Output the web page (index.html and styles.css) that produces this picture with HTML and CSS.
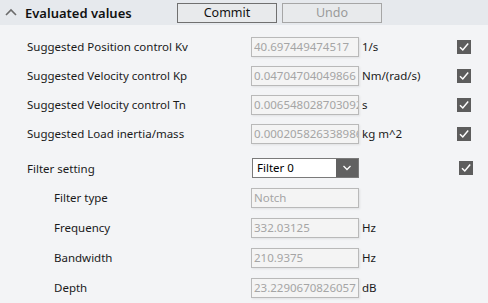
FILE: index.html
```html
<!DOCTYPE html>
<html>
<head>
<meta charset="utf-8">
<link rel="stylesheet" href="styles.css">
</head>
<body>
<div class="panel">
  <div class="header">
    <svg class="chev" width="12" height="8" viewBox="0 0 12 8"><path d="M1 7 L6 2 L11 7" fill="none" stroke="#6b6b6b" stroke-width="1.6"/></svg>
    <span class="title">Evaluated values</span>
    <button class="btn">Commit</button>
    <button class="btn disabled">Undo</button>
  </div>
  <div class="rows">
    <div class="row">
      <span class="label">Suggested Position control Kv</span>
      <input class="input" type="text" readonly value="40.697449474517">
      <span class="unit">1/s</span>
      <span class="check"><svg width="14" height="14" viewBox="0 0 14 14"><path d="M3 7.2 L5.8 10 L11.2 3.6" fill="none" stroke="#fff" stroke-width="1.5"/></svg></span>
    </div>
    <div class="row">
      <span class="label">Suggested Velocity control Kp</span>
      <input class="input" type="text" readonly value="0.04704704049866">
      <span class="unit">Nm/(rad/s)</span>
      <span class="check"><svg width="14" height="14" viewBox="0 0 14 14"><path d="M3 7.2 L5.8 10 L11.2 3.6" fill="none" stroke="#fff" stroke-width="1.5"/></svg></span>
    </div>
    <div class="row">
      <span class="label">Suggested Velocity control Tn</span>
      <input class="input" type="text" readonly value="0.0065480287030929">
      <span class="unit">s</span>
      <span class="check"><svg width="14" height="14" viewBox="0 0 14 14"><path d="M3 7.2 L5.8 10 L11.2 3.6" fill="none" stroke="#fff" stroke-width="1.5"/></svg></span>
    </div>
    <div class="row">
      <span class="label">Suggested Load inertia/mass</span>
      <input class="input" type="text" readonly value="0.0002058263389865">
      <span class="unit">kg m^2</span>
      <span class="check"><svg width="14" height="14" viewBox="0 0 14 14"><path d="M3 7.2 L5.8 10 L11.2 3.6" fill="none" stroke="#fff" stroke-width="1.5"/></svg></span>
    </div>
    <div class="row filter">
      <span class="label">Filter setting</span>
      <div class="select">
        <span class="sel-text">Filter 0</span>
        <span class="sel-btn"><svg width="10" height="6" viewBox="0 0 10 6"><path d="M1.5 1 L5 4.5 L8.5 1" fill="none" stroke="#fff" stroke-width="1.3"/></svg></span>
      </div>
      <span class="unit"></span>
      <span class="check"><svg width="14" height="14" viewBox="0 0 14 14"><path d="M3 7.2 L5.8 10 L11.2 3.6" fill="none" stroke="#fff" stroke-width="1.5"/></svg></span>
    </div>
    <div class="row sub">
      <span class="label">Filter type</span>
      <input class="input" type="text" readonly value="Notch">
      <span class="unit"></span>
    </div>
    <div class="row sub">
      <span class="label">Frequency</span>
      <input class="input" type="text" readonly value="332.03125">
      <span class="unit">Hz</span>
    </div>
    <div class="row sub">
      <span class="label">Bandwidth</span>
      <input class="input" type="text" readonly value="210.9375">
      <span class="unit">Hz</span>
    </div>
    <div class="row sub">
      <span class="label">Depth</span>
      <input class="input" type="text" readonly value="23.2290670826057">
      <span class="unit">dB</span>
    </div>
  </div>
</div>
</body>
</html>
```
FILE: styles.css
```css
html, body {
  margin: 0;
  padding: 0;
  background: #f3f4f6;
}
body {
  font-family: "Noto Sans", "Open Sans", sans-serif;
  font-size: 11.5px;
  color: #1a1a1a;
  width: 488px;
  height: 303px;
  overflow: hidden;
}
.header {
  height: 25px;
  background: #e6e9ed;
  display: flex;
  align-items: center;
}
.chev {
  margin-left: 5px;
  margin-top: -1px;
}
.title {
  margin-left: 8px;
  width: 152px;
  font-size: 13px;
  font-weight: 600;
  color: #111;
}
.btn {
  width: 100px;
  height: 20px;
  margin: 0 5px 0 0;
  padding: 0;
  border: 1px solid #707070;
  background: #e8eaec;
  font-family: inherit;
  font-size: 12.5px;
  color: #111;
  line-height: 16px;
}
.btn.disabled {
  border-color: #a6a6a6;
  color: #9a9a9a;
}
.rows {
  padding-top: 7px;
}
.row {
  display: grid;
  grid-template-columns: 224px 108px 1fr 14px;
  align-items: center;
  height: 29px;
  padding-left: 27px;
  padding-right: 17px;
}
.row.filter {
  margin-top: 5.5px;
  padding-right: 15px;
}
.row.sub {
  height: 30px;
}
.row.sub .label {
  padding-left: 27px;
}
.input {
  box-sizing: border-box;
  width: 108px;
  height: 20px;
  margin: 0;
  border: 1px solid #b9b9b9;
  background: #f4f4f4;
  color: #a5a5a5;
  padding: 0 0 0 2px;
  font-family: inherit;
  font-size: 11.5px;
  outline: none;
  box-shadow: 1px 1px 2px rgba(0, 0, 0, 0.08);
}
.unit {
  padding-left: 3px;
  white-space: nowrap;
}
.check {
  width: 14px;
  height: 14px;
  background: #5d5d5d;
  display: block;
}
.check svg {
  display: block;
}
.select {
  box-sizing: border-box;
  height: 20px;
  border: 1px solid #7a7a7a;
  background: #fff;
  display: flex;
  align-items: stretch;
  margin-left: 1px;
}
.sel-text {
  flex: 1;
  padding-left: 4px;
  line-height: 17px;
  color: #000;
}
.sel-btn {
  width: 22px;
  background: #616161;
  display: flex;
  align-items: center;
  justify-content: center;
}
```
